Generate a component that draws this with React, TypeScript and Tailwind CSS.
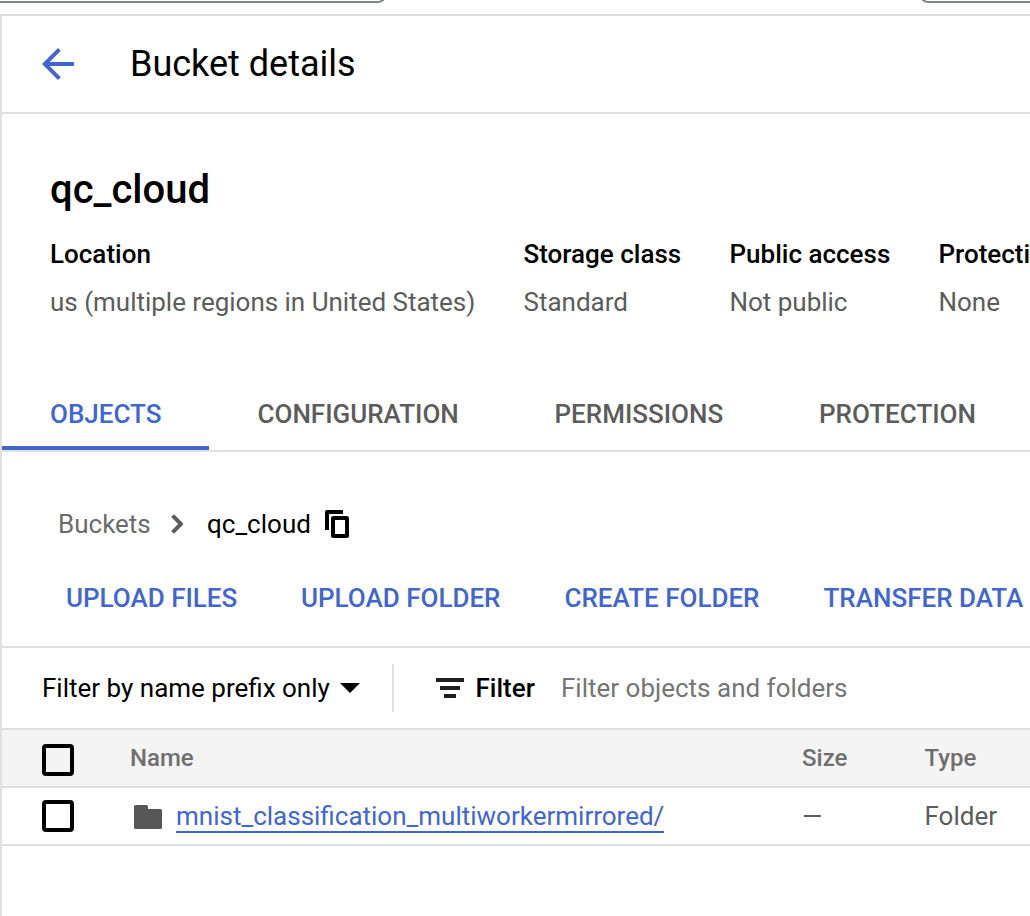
import React from "react";

const info = [
  { label: "Location", value: "us (multiple regions in United States)", width: "w-[473.5px]" },
  { label: "Storage class", value: "Standard", width: "w-[206px]" },
  { label: "Public access", value: "Not public", width: "w-[209px]" },
  { label: "Protection", value: "None", width: "w-[200px]" },
];

const tabs = [
  { label: "OBJECTS", width: "w-[207px]", active: true },
  { label: "CONFIGURATION", width: "w-[297px]", active: false },
  { label: "PERMISSIONS", width: "w-[264.5px]", active: false },
  { label: "PROTECTION", width: "w-[254px]", active: false },
];

const actions = [
  { label: "UPLOAD FILES", width: "w-[235px]" },
  { label: "UPLOAD FOLDER", width: "w-[263.5px]" },
  { label: "CREATE FOLDER", width: "w-[259px]" },
  { label: "TRANSFER DATA", width: "w-[240px]" },
];

function Checkbox() {
  return <span role="checkbox" aria-checked={false} className="block size-8 shrink-0 rounded-[4px] border-4 border-black" />;
}

export default function App() {
  return (
    <div className="flex h-[916px] w-[1030px] flex-col overflow-hidden bg-white font-['Roboto',sans-serif] text-[26px] leading-8 whitespace-nowrap text-black">
      <div className="flex h-[14px] shrink-0 items-start justify-between overflow-hidden">
        <div className="-mt-[37px] h-10 w-[386px] rounded-br-[8px] border-r-2 border-b-2 border-[#80868b]" />
        <div className="-mt-[37px] h-10 w-[110px] rounded-bl-[8px] border-b-2 border-l-2 border-[#80868b]" />
      </div>

      <main className="flex grow flex-col border-t-2 border-l-2 border-t-[#dadce0] border-l-[#e0e0e0]">
        <header className="flex h-[98px] shrink-0 items-center border-b-2 border-[#e0e0e0] pl-8">
          <svg viewBox="0 0 24 24" className="size-12 fill-[#3f66d1]">
            <path d="M20 11H7.83l5.59-5.59L12 4l-8 8 8 8 1.41-1.41L7.83 13H20z" />
          </svg>
          <h1 className="ml-12 text-[36px] leading-[48px]">Bucket details</h1>
        </header>

        <section className="h-[262px] shrink-0 pt-[52px] pl-12">
          <h2 className="text-[40px] leading-[48px] font-medium">qc_cloud</h2>
          <dl className="mt-6 flex">
            {info.map((i) => (
              <div key={i.label} className={`${i.width} shrink-0`}>
                <dt className="font-medium">{i.label}</dt>
                <dd className="mt-4 tracking-[-0.015px] text-[#5c5c5c]">{i.value}</dd>
              </div>
            ))}
          </dl>
        </section>

        <nav className="flex h-[76px] shrink-0 border-b-2 border-[#e0e0e0] font-medium">
          {tabs.map((t) => (
            <div
              key={t.label}
              className={`${t.width} shrink-0 border-b-4 pt-[22px] ${t.active ? "border-[#3f66d1] pl-12 text-[#3f66d1]" : "border-transparent pl-[48.5px] text-[#5c5c5c]"}`}
            >
              {t.label}
            </div>
          ))}
        </nav>

        <div className="mt-14 flex h-8 shrink-0 items-center pl-14">
          <span className="w-[112.5px] text-[#6b6b6b]">Buckets</span>
          <svg viewBox="0 0 12 20" className="h-5 w-3 fill-none stroke-[#5c5c5c] stroke-[4px]">
            <path d="M1.6 1.6 10 10l-8.4 8.4" />
          </svg>
          <span className="ml-[24.5px] w-[118px]">qc_cloud</span>
          <svg viewBox="0 0 24 28" className="h-7 w-6">
            <path d="M18 0H2a2 2 0 0 0-2 2v18h4V4h14z" />
            <rect x="8" y="8" width="14" height="18" rx="0.5" className="fill-none stroke-black stroke-[4px]" />
          </svg>
        </div>

        <div className="mt-[42px] flex h-[66px] shrink-0 border-b-2 border-[#e0e0e0] pl-16 font-medium text-[#3f66d1]">
          {actions.map((a) => (
            <button key={a.label} className={`${a.width} h-8 shrink-0 text-left`}>
              {a.label}
            </button>
          ))}
        </div>

        <div className="flex h-[82px] shrink-0 items-center border-b-2 border-[#e0e0e0] pl-10">
          <span className="w-[298px]">Filter by name prefix only</span>
          <svg viewBox="0 0 20 10" className="h-[10px] w-5">
            <path d="M0 0h20L10 10z" />
          </svg>
          <div className="ml-8 h-12 w-[2px] bg-[#e0e0e0]" />
          <svg viewBox="0 0 28 20" className="ml-[42px] h-5 w-7 fill-[#1f1f1f]">
            <path d="M0 0h28v4H0zM4 8h20v4H4zM8 16h12v4H8z" />
          </svg>
          <span className="ml-[11.5px] w-[85.5px] font-medium">Filter</span>
          <span className="text-[#757575]">Filter objects and folders</span>
        </div>

        <div className="flex h-[58px] shrink-0 border-b-2 border-[#e0e0e0] bg-[#f4f4f4] pl-10 text-[24px] font-medium text-[#6f6f6f]">
          <div className="w-[88px] pt-[14px]"><Checkbox /></div>
          <span className="w-[672px] pt-3">Name</span>
          <span className="w-[122.5px] pt-3">Size</span>
          <span className="pt-3">Type</span>
        </div>

        <div className="flex h-[58px] shrink-0 border-b-2 border-[#e0e0e0] pl-10 text-[#5c5c5c]">
          <div className="w-[92px] pt-3"><Checkbox /></div>
          <div className="flex w-[668px] pt-3">
            <svg viewBox="0 0 28 24" className="mt-[5px] h-6 w-7 fill-[#575757]">
              <path d="M1.5 0h11Q14 0 14 1.5V4h12.5Q28 4 28 5.5v17q0 1.5-1.5 1.5h-25Q0 24 0 22.5v-21Q0 0 1.5 0z" />
            </svg>
            <a className="ml-[14px] h-[33px] border-b-2 border-[#3f66d1] text-[#3f66d1]">mnist_classification_multiworkermirrored/</a>
          </div>
          <span className="w-[122.5px] pt-3">—</span>
          <span className="pt-3">Folder</span>
        </div>
      </main>
    </div>
  );
}
